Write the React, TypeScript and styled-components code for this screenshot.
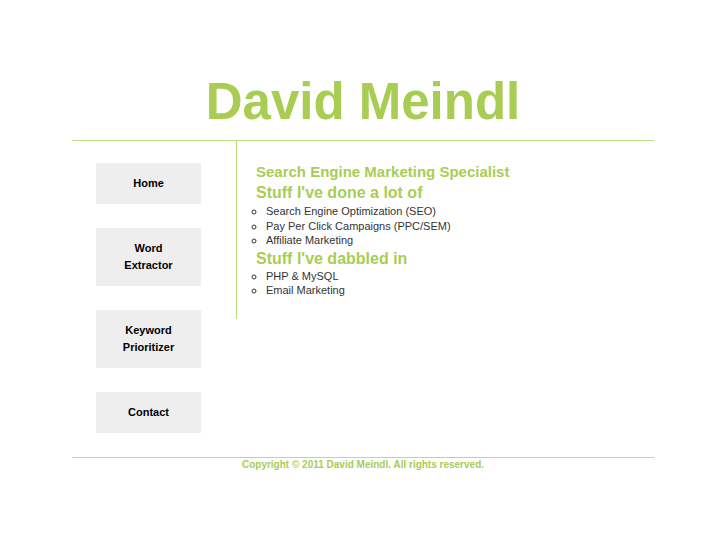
import React from "react";
import styled, { createGlobalStyle } from "styled-components";

const GREEN = "#a9cd53";
const RULE = "#bcdc80";

const Global = createGlobalStyle`
  body {
    margin: 0;
    background: #ffffff;
    font-family: "Liberation Sans", Arial, sans-serif;
  }
`;

const Page = styled.div`
  width: 582px;
  margin: 0 0 0 72px;
`;

const Header = styled.header`
  border-bottom: 1px solid ${RULE};
  padding: 75px 0 11px;
  text-align: center;
`;

const Title = styled.h1`
  margin: 0;
  font-size: 51px;
  line-height: 54px;
  font-weight: bold;
  color: ${GREEN};
`;

const Body = styled.div`
  display: flex;
  align-items: flex-start;
  border-bottom: 1px solid ${RULE};
`;

const Nav = styled.nav`
  width: 164px;
  padding: 22px 0 24px 24px;
  box-sizing: border-box;
  display: flex;
  flex-direction: column;
  gap: 24px;
`;

const NavButton = styled.a`
  display: block;
  width: 105px;
  padding: 12px 0;
  background: #eeeeee;
  color: #000;
  font-size: 11px;
  font-weight: bold;
  line-height: 17px;
  text-align: center;
  text-decoration: none;
`;

const Content = styled.main`
  flex: 1;
  border-left: 1px solid ${RULE};
  padding: 21px 0 21px 19px;
`;

const Heading = styled.h2<{ $size: number; $line: number }>`
  margin: 0;
  font-size: ${(p) => p.$size}px;
  line-height: ${(p) => p.$line}px;
  font-weight: bold;
  color: ${GREEN};
`;

const List = styled.ul`
  margin: 0;
  padding: 0 0 0 10px;
  list-style: circle;
  font-size: 11px;
  line-height: 14.5px;
  color: #333;
  li::marker {
    font-size: 12px;
  }
`;

const Footer = styled.footer`
  padding: 1px 0;
  text-align: center;
  font-size: 10px;
  font-weight: bold;
  color: ${GREEN};
`;

const navItems = [["Home"], ["Word", "Extractor"], ["Keyword", "Prioritizer"], ["Contact"]];

export default function App() {
  return (
    <>
      <Global />
      <Page>
        <Header>
          <Title>David Meindl</Title>
        </Header>
        <Body>
          <Nav>
            {navItems.map((lines) => (
              <NavButton href="#" key={lines.join(" ")}>
                {lines.map((l, i) => (
                  <React.Fragment key={l}>
                    {i > 0 && <br />}
                    {l}
                  </React.Fragment>
                ))}
              </NavButton>
            ))}
          </Nav>
          <Content>
            <Heading $size={15} $line={19}>Search Engine Marketing Specialist</Heading>
            <Heading $size={16} $line={23}>Stuff I've done a lot of</Heading>
            <List>
              <li>Search Engine Optimization (SEO)</li>
              <li>Pay Per Click Campaigns (PPC/SEM)</li>
              <li>Affiliate Marketing</li>
            </List>
            <Heading $size={16} $line={21}>Stuff I've dabbled in</Heading>
            <List>
              <li>PHP &amp; MySQL</li>
              <li>Email Marketing</li>
            </List>
          </Content>
        </Body>
        <Footer>Copyright © 2011 David Meindl. All rights reserved.</Footer>
      </Page>
    </>
  );
}
